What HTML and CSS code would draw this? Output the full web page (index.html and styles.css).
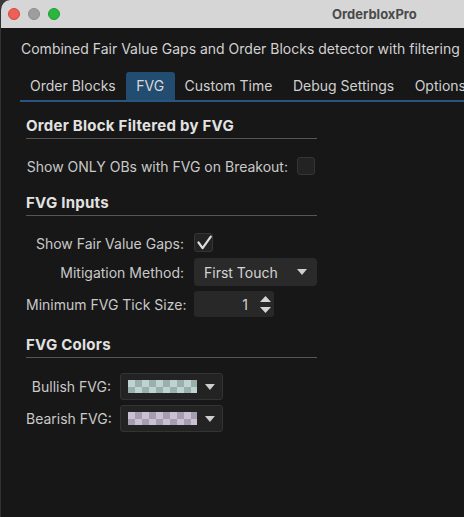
FILE: index.html
```html
<!DOCTYPE html>
<html lang="en">
<head>
<meta charset="utf-8">
<title>OrderbloxPro</title>
<link rel="stylesheet" href="styles.css">
</head>
<body>
<div class="window">
  <div class="titlebar">
    <div class="lights">
      <span class="light light-red"></span>
      <span class="light light-grey"></span>
      <span class="light light-green"></span>
    </div>
    <div class="title">OrderbloxPro</div>
  </div>
  <div class="content">
    <p class="desc">Combined Fair Value Gaps and Order Blocks detector with filtering</p>
    <div class="tabs">
      <div class="tab">Order Blocks</div>
      <div class="tab tab-active">FVG</div>
      <div class="tab">Custom Time</div>
      <div class="tab">Debug Settings</div>
      <div class="tab">Options</div>
    </div>
    <div class="panel">
      <section class="group group-first">
        <h2 class="group-title">Order Block Filtered by FVG</h2>
        <div class="form form-filter">
          <span class="label">Show ONLY OBs with FVG on Breakout:</span>
          <span class="checkbox"></span>
        </div>
      </section>
      <section class="group">
        <h2 class="group-title">FVG Inputs</h2>
        <div class="form form-inputs">
          <span class="label">Show Fair Value Gaps:</span>
          <span class="checkbox checkbox-checked">
            <svg width="19" height="19" viewBox="0 0 19 19"><path d="M3.5 9.5 L7.6 15.2 L15.8 3.6" fill="none" stroke="#dcdcdc" stroke-width="2.2" stroke-linecap="round" stroke-linejoin="round"/></svg>
          </span>
          <span class="label">Mitigation Method:</span>
          <div class="select">
            <span class="select-text">First Touch</span>
            <svg class="arrow" width="10" height="6" viewBox="0 0 10 6"><path d="M0 0 H10 L5 6 Z" fill="#cfcfcf"/></svg>
          </div>
          <span class="label">Minimum FVG Tick Size:</span>
          <div class="spin">
            <span class="spin-value">1</span>
            <svg class="spin-arrows" width="11" height="17" viewBox="0 0 11 17"><path d="M5.5 0 L11 6 H0 Z M0 11 H11 L5.5 17 Z" fill="#d4d4d4"/></svg>
          </div>
        </div>
      </section>
      <section class="group">
        <h2 class="group-title">FVG Colors</h2>
        <div class="form form-colors">
          <span class="label">Bullish FVG:</span>
          <div class="color-btn">
            <span class="swatch swatch-bull"></span>
            <svg class="arrow" width="10" height="6" viewBox="0 0 10 6"><path d="M0 0 H10 L5 6 Z" fill="#cfcfcf"/></svg>
          </div>
          <span class="label">Bearish FVG:</span>
          <div class="color-btn">
            <span class="swatch swatch-bear"></span>
            <svg class="arrow" width="10" height="6" viewBox="0 0 10 6"><path d="M0 0 H10 L5 6 Z" fill="#cfcfcf"/></svg>
          </div>
        </div>
      </section>
    </div>
  </div>
</div>
</body>
</html>
```

FILE: styles.css
```css
html, body {
  margin: 0;
  padding: 0;
  width: 464px;
  height: 517px;
  overflow: hidden;
  background: #3a3a3a;
}

.window {
  width: 744px;
  height: 517px;
  background: #171717;
  border-left: 1px solid #323232;
  border-top-left-radius: 10px;
  overflow: hidden;
  font-family: Inter, "Noto Sans", sans-serif;
  font-size: 14px;
  color: #cfcfcf;
  box-sizing: border-box;
}

.titlebar {
  height: 28px;
  background: #d6d6d6;
  display: flex;
  align-items: center;
}

.lights {
  display: flex;
  gap: 8px;
  padding-left: 7px;
}

.light {
  width: 12px;
  height: 12px;
  border-radius: 50%;
  box-sizing: border-box;
}

.light-red { background: #ed5f57; border: 0.5px solid #d5473f; }
.light-grey { background: #9e9e9e; border: 0.5px solid #8c8c8c; }
.light-green { background: #2bb640; border: 0.5px solid #1f9d31; }

.title {
  margin-left: 272px;
  font-weight: 700;
  font-size: 13px;
  color: #4a4a4a;
}

.content {
  padding-top: 12px;
}

.desc {
  margin: 0 0 0 20px;
  line-height: 17px;
  color: #d2d2d2;
  white-space: nowrap;
}

.tabs {
  margin: 15px 0 0 19px;
  display: flex;
  border-bottom: 2px solid #2a5580;
  height: 28px;
}

.tab {
  padding: 0 10.5px 0 10px;
  line-height: 28px;
  color: #d0d0d0;
  white-space: nowrap;
  border-radius: 3px 3px 0 0;
}

.tab-active {
  background: #234c71;
  color: #d8d8d8;
}

.panel {
  width: 291px;
  padding-left: 25px;
}

.group {
  margin-top: 18px;
}

.group-first {
  margin-top: 14px;
}

.group-title {
  margin: 0;
  font-size: 15px;
  line-height: 19px;
  font-weight: 700;
  letter-spacing: 0.25px;
  color: #e2e2e2;
  padding-bottom: 3px;
  border-bottom: 1px solid #565656;
}

.form {
  display: grid;
  align-items: center;
}

.label {
  text-align: right;
  white-space: nowrap;
  color: #c9c9c9;
  line-height: 17px;
}

.form-filter {
  margin-top: 18px;
  grid-template-columns: 262px 18px;
  column-gap: 9px;
}

.form-inputs {
  margin-top: 17px;
  grid-template-columns: 158px auto;
  column-gap: 10px;
  row-gap: 5px;
  justify-items: start;
}

.form-inputs .label,
.form-colors .label {
  justify-self: stretch;
}

.form-colors {
  margin-top: 15px;
  grid-template-columns: 85px 103px;
  column-gap: 9px;
  row-gap: 5px;
}

.checkbox {
  display: block;
  width: 18px;
  height: 18px;
  box-sizing: border-box;
  background: #232323;
  border: 1px solid #353535;
  border-radius: 3px;
}

.checkbox-checked {
  width: 19px;
  height: 19px;
  position: relative;
  margin-bottom: 1px;
}

.checkbox-checked svg {
  position: absolute;
  left: 0;
  top: -1px;
}

.select {
  width: 123px;
  height: 28px;
  box-sizing: border-box;
  background: #2a2a2a;
  border-radius: 4px;
  display: flex;
  align-items: center;
  padding: 0 10px;
}

.select-text {
  flex: 1;
  color: #d4d4d4;
}

.spin {
  width: 80px;
  height: 26px;
  box-sizing: border-box;
  background: #282828;
  border-radius: 3px;
  display: flex;
  align-items: center;
  padding-right: 3px;
}

.spin-value {
  flex: 1;
  text-align: right;
  color: #d4d4d4;
}

.spin-arrows {
  margin-left: 12px;
  display: block;
}

.color-btn {
  height: 27px;
  box-sizing: border-box;
  background: #232323;
  border: 1px solid #333333;
  border-radius: 3px;
  display: flex;
  align-items: center;
  padding: 0 7px;
  gap: 8px;
}

.swatch {
  display: block;
  width: 70px;
  height: 13px;
  background-size: 14px 14px;
}

.swatch-bull {
  background-color: #bed4d1;
  background-image: repeating-conic-gradient(#9bafac 0 25%, #bed4d1 0 50%);
}

.swatch-bear {
  background-color: #c9c1d3;
  background-image: repeating-conic-gradient(#a79db0 0 25%, #c9c1d3 0 50%);
}

.arrow {
  display: block;
}
```
